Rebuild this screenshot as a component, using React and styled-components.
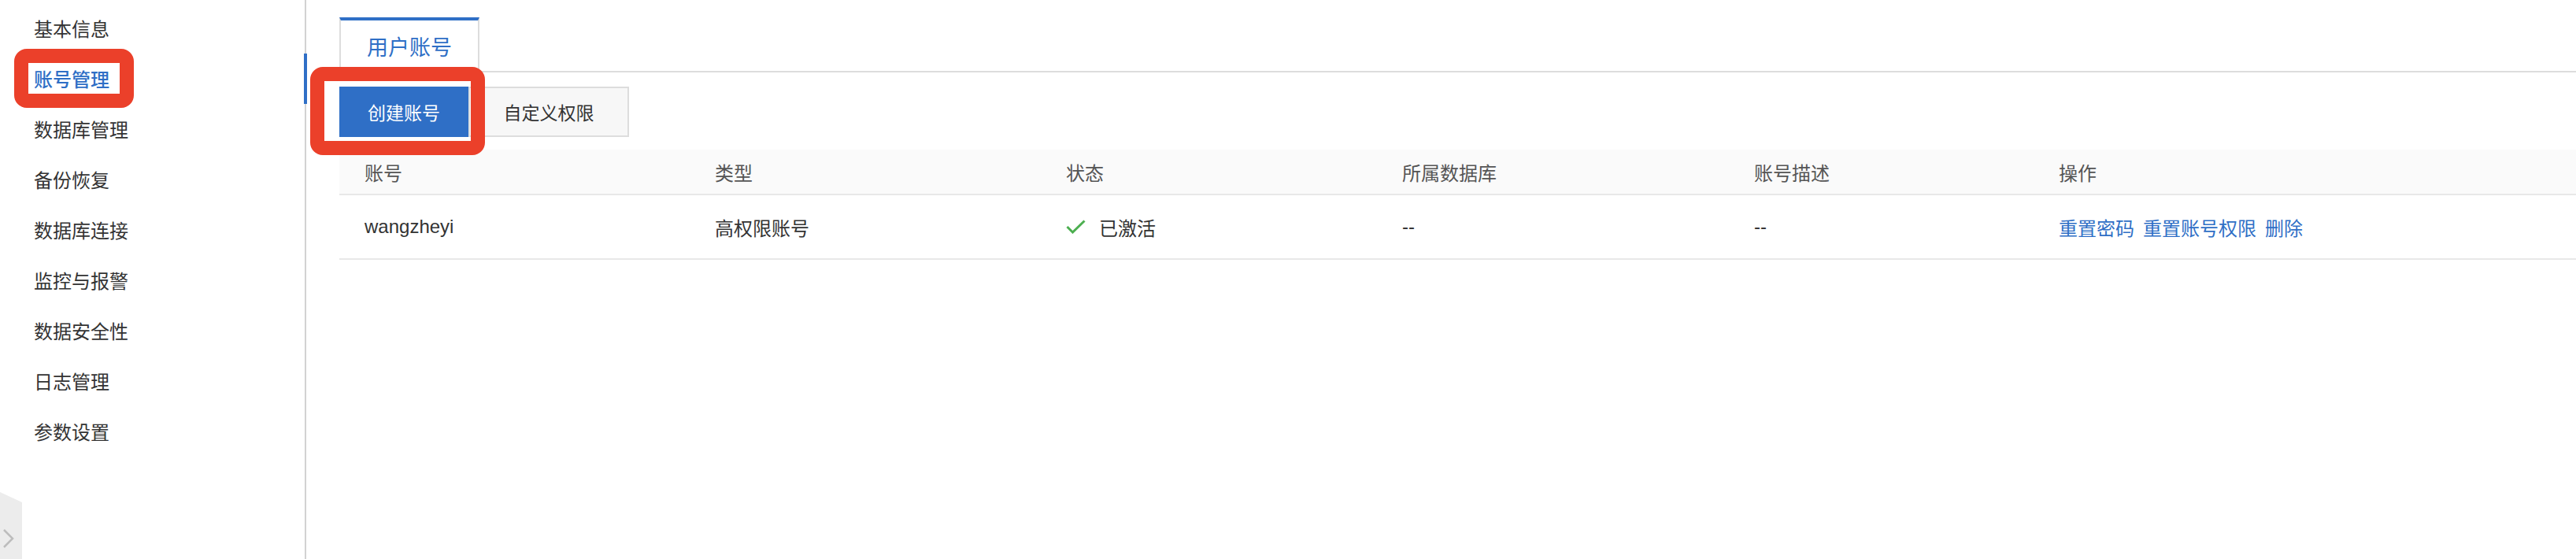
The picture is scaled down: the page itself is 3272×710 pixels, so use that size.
import React from "react";
import styled, { createGlobalStyle } from "styled-components";

const GlobalStyle = createGlobalStyle`
  html, body {
    margin: 0;
    padding: 0;
    background: #ffffff;
  }
  body {
    font-family: "Liberation Sans", "Noto Sans CJK SC", sans-serif;
    color: #333333;
  }
`;

const Page = styled.div`
  position: relative;
  display: flex;
  height: 710px;
  overflow: hidden;
`;

const Sidebar = styled.aside`
  position: relative;
  width: 387px;
  flex-shrink: 0;
  border-right: 2px solid #d2d2d2;
`;

const Menu = styled.ul`
  list-style: none;
  margin: 0;
  padding: 3px 0 0 0;
`;

const MenuItem = styled.li`
  position: relative;
  height: 64px;
  display: flex;
  align-items: center;
  padding-left: 43px;
  font-size: 24px;
  font-weight: ${(p) => (p.active ? 500 : 400)};
  color: ${(p) => (p.active ? "#2f6fc6" : "#333333")};

  &::after {
    content: "";
    display: ${(p) => (p.active ? "block" : "none")};
    position: absolute;
    right: -3px;
    top: 1px;
    width: 4px;
    height: 64px;
    background: #2f6fc6;
  }
`;

/* little grey collapse handle at the bottom left */
const Collapse = styled.div`
  position: absolute;
  left: 0;
  bottom: 0;
  width: 28px;
  height: 85px;
  background: #ececec;
  clip-path: polygon(0 0, 100% 13px, 100% 100%, 0 100%);
  display: flex;
  align-items: flex-start;
  padding-top: 47px;
  box-sizing: border-box;
`;

const Main = styled.main`
  flex: 1;
  padding: 22px 0 0 42px;
  min-width: 0;
`;

const TabBar = styled.div`
  display: flex;
  border-bottom: 2px solid #dddddd;
`;

const Tab = styled.div`
  width: 178px;
  height: 70px;
  box-sizing: border-box;
  margin-bottom: -2px;
  border: 2px solid #dddddd;
  border-top: 4px solid #2f6fc6;
  border-bottom: 2px solid #ffffff;
  background: #ffffff;
  display: flex;
  align-items: center;
  justify-content: center;
  font-size: 27px;
  color: #2f6fc6;
`;

const Toolbar = styled.div`
  display: flex;
  margin-top: 18px;
`;

const Button = styled.button`
  height: 64px;
  width: ${(p) => p.w}px;
  box-sizing: border-box;
  font-family: inherit;
  font-size: 23px;
  cursor: pointer;
  border: ${(p) => (p.primary ? "none" : "2px solid #dddddd")};
  background: ${(p) => (p.primary ? "#2f6fc6" : "#f7f7f7")};
  color: ${(p) => (p.primary ? "#ffffff" : "#333333")};
  padding: 0;
`;

const Table = styled.div`
  margin-top: 16px;
`;

const Row = styled.div`
  display: grid;
  grid-template-columns: 445px 446px 427px 447px 387px 1fr;
  height: ${(p) => (p.head ? 56 : 80)}px;
  background: ${(p) => (p.head ? "#fafafa" : "#ffffff")};
  border-bottom: 2px solid #e8e8e8;
  font-size: 24px;
  color: ${(p) => (p.head ? "#555555" : "#333333")};
`;

const Cell = styled.div`
  display: flex;
  align-items: center;
  padding-left: 32px;
  gap: 11px;
`;

const Status = styled.span`
  display: inline-flex;
  align-items: center;
  gap: 17px;
`;

const Link = styled.a`
  color: #2f6fc6;
  text-decoration: none;
  cursor: pointer;
`;

/* red annotation frames drawn over the screenshot */
const Mark = styled.div`
  position: absolute;
  left: ${(p) => p.x}px;
  top: ${(p) => p.y}px;
  width: ${(p) => p.w}px;
  height: ${(p) => p.h}px;
  box-sizing: border-box;
  border: 18px solid #eb402a;
  border-radius: 16px;
  pointer-events: none;
`;

const menu = [
  "基本信息",
  "账号管理",
  "数据库管理",
  "备份恢复",
  "数据库连接",
  "监控与报警",
  "数据安全性",
  "日志管理",
  "参数设置",
];

const heads = ["账号", "类型", "状态", "所属数据库", "账号描述", "操作"];

const App = () => {
  return (
    <>
      <GlobalStyle />
      <Page>
        <Sidebar>
          <Menu>
            {menu.map((m) => (
              <MenuItem key={m} active={m === "账号管理"}>
                {m}
              </MenuItem>
            ))}
          </Menu>
          <Collapse>
            <svg width="16" height="24" viewBox="0 0 16 24" style={{ marginLeft: 3 }}>
              <path d="M2 1 L13 12 L2 23" fill="none" stroke="#bdbdbd" strokeWidth="2.5" />
            </svg>
          </Collapse>
        </Sidebar>

        <Main>
          <TabBar>
            <Tab>用户账号</Tab>
          </TabBar>
          <Toolbar>
            <Button primary w={164}>创建账号</Button>
            <Button w={204}>自定义权限</Button>
          </Toolbar>
          <Table>
            <Row head>
              {heads.map((h) => (
                <Cell key={h}>{h}</Cell>
              ))}
            </Row>
            <Row>
              <Cell>wangzheyi</Cell>
              <Cell>高权限账号</Cell>
              <Cell>
                <Status>
                  <svg width="25" height="18" viewBox="0 0 25 18">
                    <path d="M1.5 9 L8.5 16 L23.5 1.5" fill="none" stroke="#4caf50" strokeWidth="3" />
                  </svg>
                  已激活
                </Status>
              </Cell>
              <Cell>--</Cell>
              <Cell>--</Cell>
              <Cell>
                <Link>重置密码</Link>
                <Link>重置账号权限</Link>
                <Link>删除</Link>
              </Cell>
            </Row>
          </Table>
        </Main>

        <Mark x={18} y={62} w={152} h={75} />
        <Mark x={394} y={85} w={222} h={112} />
      </Page>
    </>
  );
};

export default App;
